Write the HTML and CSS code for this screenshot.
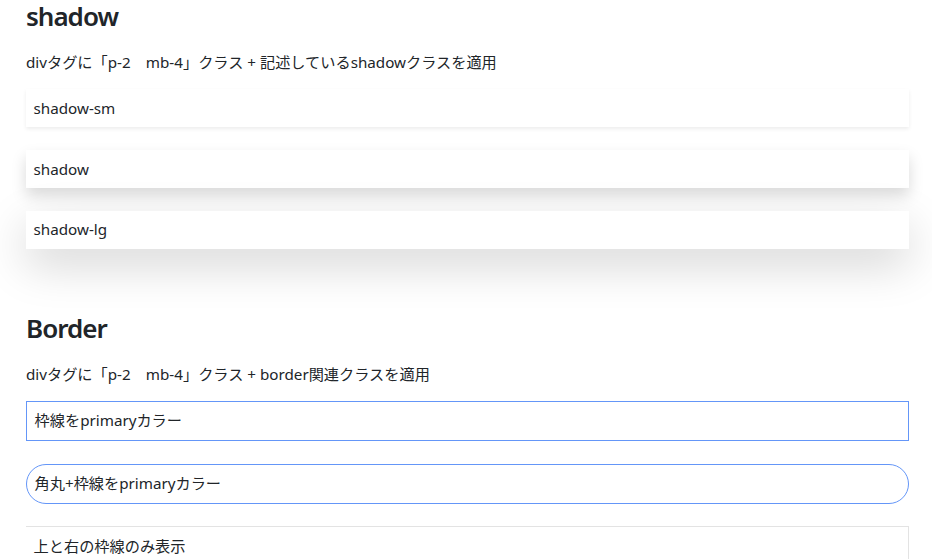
FILE: index.html
```html
<!DOCTYPE html>
<html lang="ja">
  <head>
    <meta charset="UTF-8" />
    <title>shadow / border</title>
    <link rel="stylesheet" href="styles.css">
  </head>
  <body>
    <main class="page">
      <section class="demo">
        <h2>shadow</h2>
        <p>divタグに「p-2　mb-4」クラス + 記述しているshadowクラスを適用</p>
        <div class="box shadow-sm">shadow-sm</div>
        <div class="box shadow">shadow</div>
        <div class="box shadow-lg">shadow-lg</div>
      </section>

      <section class="demo demo-border">
        <h2>Border</h2>
        <p>divタグに「p-2　mb-4」クラス + border関連クラスを適用</p>
        <div class="box border-primary">枠線をprimaryカラー</div>
        <div class="box border-primary rounded-pill">角丸+枠線をprimaryカラー</div>
        <div class="box border-top-right">上と右の枠線のみ表示</div>
      </section>
    </main>
  </body>
</html>
```

FILE: styles.css
```css
html {
  font-size: 15.2px;
}

body {
  margin: 0;
  font-family: "Noto Sans", "Noto Sans CJK JP", sans-serif;
  color: #212529;
  background: #fff;
  line-height: 1.5;
  overflow: hidden;
}

.page {
  margin: 1px 23px 0 26px;
}

h2 {
  font-size: 26px;
  font-weight: 600;
  letter-spacing: -1px;
  line-height: 1.2;
  margin: 0 0 19px;
}

p {
  margin: 0 0 1rem;
}

.demo-border {
  margin-top: 64px;
}

.box {
  padding: 0.5rem;
  margin-bottom: 1.5rem;
  background: #fff;
}

.shadow-sm {
  box-shadow: 0 0.125rem 0.25rem rgba(0, 0, 0, 0.075);
}

.shadow {
  box-shadow: 0 0.5rem 1rem rgba(0, 0, 0, 0.15);
}

.shadow-lg {
  box-shadow: 0 1rem 3rem rgba(0, 0, 0, 0.175);
}

.border-primary {
  border: 1px solid #6496f8;
  padding: 0.5rem;
}

.rounded-pill {
  border-radius: 50rem;
}

.border-top-right {
  border-top: 1px solid #e3e3e3;
  border-right: 1px solid #e3e3e3;
}
```
